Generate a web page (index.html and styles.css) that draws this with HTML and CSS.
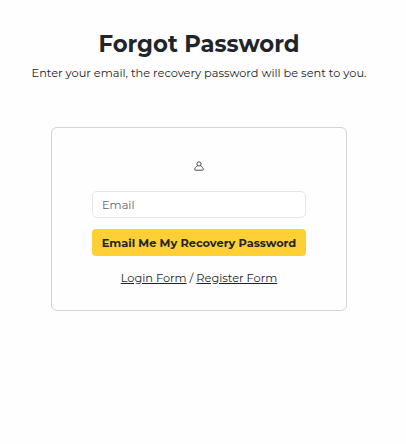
FILE: index.html
```html
<!DOCTYPE html>
<html lang="en">
<head>
<meta charset="utf-8">
<title>Forgot Password</title>
<link rel="stylesheet" href="styles.css">
</head>
<body>
<main class="page">
  <h1 class="title">Forgot Password</h1>
  <p class="lead">Enter your email, the recovery password will be sent to you.</p>
  <form class="card">
    <svg class="person" viewBox="0 0 12 12" fill="none" stroke="currentColor" stroke-width=".8"><circle cx="6" cy="3.9" r="2.1"/><path d="M4.7 5.7C2.8 6.5 1.8 8 1.7 9.7Q1.7 10.2 2.2 10.2H9.8Q10.3 10.2 10.3 9.7C10.2 8 9.2 6.5 7.3 5.7"/></svg>
    <input class="field" type="email" placeholder="Email" aria-label="Email">
    <button class="submit" type="button">Email Me My Recovery Password</button>
    <p class="links"><a href="#">Login Form</a> / <a href="#">Register Form</a></p>
  </form>
</main>
</body>
</html>
```
FILE: styles.css
```css
* { box-sizing: border-box; }
body {
  margin: 0;
  background: #fefefe;
  color: #212529;
  font-family: Montserrat, Inter, sans-serif;
  font-size: 11.36px;
}
.page {
  width: 398px;
  padding-top: 28px;
  display: flex;
  flex-direction: column;
  align-items: center;
}
.title { margin: 0; font-size: 22.72px; line-height: 32px; font-weight: 700; white-space: nowrap; }
.lead { margin: 4px 0 0; line-height: 18px; white-space: nowrap; }
.card {
  width: 296px;
  height: 184px;
  margin-top: 45px;
  padding: 32px 41px 0;
  border: 1px solid #d3d3d3;
  border-radius: 6px;
  display: flex;
  flex-direction: column;
  align-items: center;
}
.person { width: 12px; height: 12px; flex: none; }
.field {
  width: 214px;
  height: 27px;
  margin-top: 19px;
  padding: 0 9px;
  border: 1px solid #e3e6e8;
  border-radius: 5px;
  background: #fff;
  font: inherit;
}
.field::placeholder { color: #5f656b; }
.submit {
  width: 214px;
  height: 27px;
  margin-top: 11px;
  padding: 0;
  border: 0;
  border-radius: 4px;
  background: #ffd036;
  color: #212529;
  font: inherit;
  font-weight: 700;
  white-space: nowrap;
}
.links { margin: 13px 0 0; line-height: 18px; white-space: nowrap; }
.links a { color: inherit; }
```
